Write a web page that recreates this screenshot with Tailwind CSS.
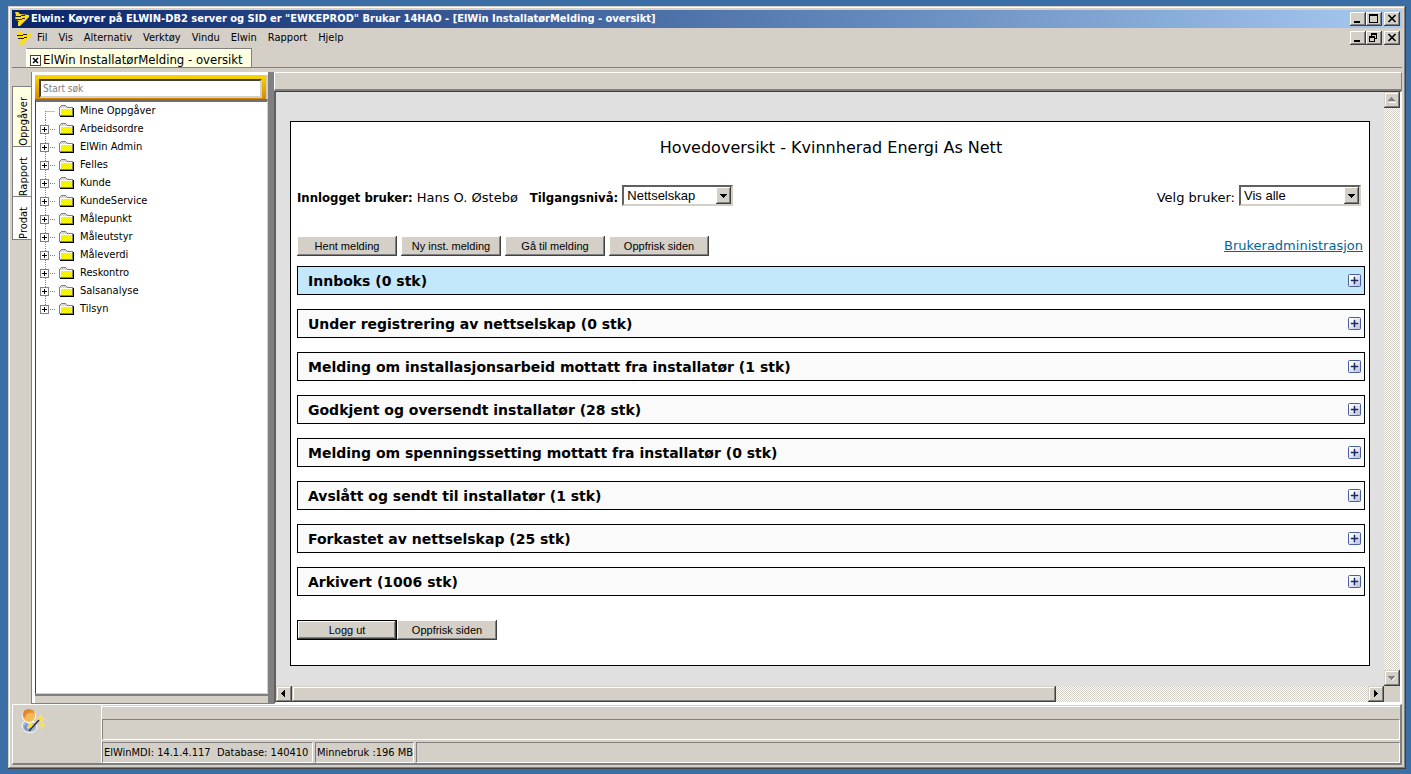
<!DOCTYPE html>
<html lang="no">
<head>
<meta charset="utf-8">
<meta name="viewport" content="width=device-width, initial-scale=1">
<title>ElWin InstallatørMelding - oversikt</title>
<script src="https://cdn.jsdelivr.net/npm/@tailwindcss/browser@4"></script>
</head>
<body class="flex min-h-screen flex-col bg-[#3a6ea5] pt-[6px] pr-[5px] pb-[5px] pl-2 font-['DejaVu_Sans_Condensed','DejaVu_Sans',sans-serif] text-[11px] leading-[14px] text-black">

<svg class="absolute size-0" aria-hidden="true">
  <symbol id="logo" viewBox="0 0 16 16">
    <path d="M1 1H4L6 3 15 4V6L6 15H4V11L5 10 2 9 1 6 2 4Z" fill="#ffdc14"/>
    <path d="M1 5h6v1H1zM7 4h4v1H7zM2 8h6v1H2zM8 7h3v1H8z" fill="#222"/>
  </symbol>
  <symbol id="folder" viewBox="0 0 15 14">
    <path d="M0 3h1V2h1V1h5v1h1v1h6v9H0Z" fill="#808080"/>
    <path d="M1 4h13v8H1zM2 2h5v1H2z" fill="#fff"/>
    <path d="M2 5h11v6H2zM2 2h5v1h-5zM1 3h7v1H1z" fill="#d4d0c8"/>
    <path d="M2 5.500h11M3 6.500h10M2 7.500h11M3 8.500h10M2 9.500h11M3 10.500h10M2 2.500h5M3 3.500h4" stroke="#ff0" stroke-dasharray="1 1" fill="none"/>
    <path d="M13 4h1v8H1v-1h12Z" fill="#808080"/>
    <path d="M14 4h1v9H1v-1h13Z" fill="#000"/>
  </symbol>
  <defs>
    <linearGradient id="hair" x1="0" y1="0" x2="1" y2="1"><stop stop-color="#d9791c"/><stop offset="1" stop-color="#f0a94a"/></linearGradient>
    <linearGradient id="plusbg" x1="0" y1="0" x2="1" y2="1"><stop offset=".2" stop-color="#fff"/><stop offset="1" stop-color="#b4bbdc"/></linearGradient>
  </defs>
  <symbol id="plus" viewBox="0 0 13 13">
    <rect x=".5" y=".5" width="12" height="12" rx="1" fill="url(#plusbg)" stroke="#4a5f9e"/>
    <path d="M6 3h1v3h3v1H7v3H6V7H3V6h3Z" fill="#1c2a60" stroke="#1c2a60" stroke-width=".5"/>
  </symbol>
</svg>

<div class="flex flex-1 flex-col bg-[#d4d0c8] p-1 shadow-[inset_-1px_-1px_#404040,inset_1px_1px_#d4d0c8,inset_-2px_-2px_#808080,inset_2px_2px_#fff]">

  <header>
    <div class="flex h-[18px] items-center bg-linear-to-r from-[#0a246a] to-[#a6caf0] pr-[2px] pl-[2px]">
      <svg class="mr-px size-4"><use href="#logo"/></svg>
      <h1 class="flex-1 font-bold whitespace-nowrap text-white">Elwin: Køyrer på ELWIN-DB2 server og SID er "EWKEPROD" Brukar 14HAO - [ElWin InstallatørMelding - oversikt]</h1>
      <div class="flex">
        <button aria-label="Minimer" class="h-[14px] w-4 bg-[#d4d0c8] shadow-[inset_-1px_-1px_#404040,inset_1px_1px_#fff,inset_-2px_-2px_#808080]"><svg class="h-[14px] w-4"><path d="M4 9h6v2H4z"/></svg></button>
        <button aria-label="Maksimer" class="mr-[2px] h-[14px] w-4 bg-[#d4d0c8] shadow-[inset_-1px_-1px_#404040,inset_1px_1px_#fff,inset_-2px_-2px_#808080]"><svg class="h-[14px] w-4"><path fill-rule="evenodd" d="M3 2h9v9H3zM4 4v6h7V4z"/></svg></button>
        <button aria-label="Lukk" class="h-[14px] w-4 bg-[#d4d0c8] shadow-[inset_-1px_-1px_#404040,inset_1px_1px_#fff,inset_-2px_-2px_#808080]"><svg class="h-[14px] w-4"><path d="M4 3l7 7M11 3l-7 7" transform="translate(.5 0)" stroke="#000" stroke-width="1.6"/></svg></button>
      </div>
    </div>
    <div class="flex h-5 items-center pr-[2px] pl-1">
      <svg class="mr-[2px] size-4"><use href="#logo"/></svg>
      <nav class="flex flex-1 gap-[11px] pl-[3px]">
        <button>Fil</button><button>Vis</button><button>Alternativ</button><button>Verktøy</button><button>Vindu</button><button>Elwin</button><button>Rapport</button><button>Hjelp</button>
      </nav>
      <div class="flex">
        <button aria-label="Minimer dokument" class="h-[14px] w-4 shadow-[inset_-1px_-1px_#404040,inset_1px_1px_#fff,inset_-2px_-2px_#808080]"><svg class="h-[14px] w-4"><path d="M4 9h6v2H4z"/></svg></button>
        <button aria-label="Gjenopprett dokument" class="mr-[2px] h-[14px] w-4 shadow-[inset_-1px_-1px_#404040,inset_1px_1px_#fff,inset_-2px_-2px_#808080]"><svg class="h-[14px] w-4"><path fill-rule="evenodd" d="M5 2h6v6H9V7h1V4H6v1H5zM3 5h6v6H3zM4 7v3h4V7z"/></svg></button>
        <button aria-label="Lukk dokument" class="h-[14px] w-4 shadow-[inset_-1px_-1px_#404040,inset_1px_1px_#fff,inset_-2px_-2px_#808080]"><svg class="h-[14px] w-4"><path d="M4 3l7 7M11 3l-7 7" transform="translate(.5 0)" stroke="#000" stroke-width="1.6"/></svg></button>
      </div>
    </div>
    <div class="flex h-5 border-b border-[#808080] pl-[14px]">
      <div class="flex w-[226px] items-center gap-[2px] overflow-hidden border-t border-r border-l border-t-[#808080] border-r-[#808080] border-l-white bg-[#ffffe1] pt-1 pl-[3px] text-[13px] leading-[16px] whitespace-nowrap">
        <button aria-label="Lukk fane" class="size-[11px] shrink-0 border border-[#404040] bg-white"><svg viewBox="0 0 9 9" class="size-[9px]"><path d="M2 2l5 5M7 2l-5 5" stroke="#000" stroke-width="1.5"/></svg></button>
        <span>ElWin InstallatørMelding - oversikt</span>
      </div>
    </div>
  </header>

  <div class="flex flex-1 pt-1">
    <div class="flex w-[19px] shrink-0 flex-col pt-[14px]">
      <button class="flex h-[61px] items-center justify-start border border-r-0 border-[#808080] bg-[#ffffe1] pl-[3px] [writing-mode:sideways-lr]">Oppgåver</button>
      <button class="flex h-[50px] items-center justify-start border border-t-0 border-r-0 border-[#808080] bg-white pl-[3px] [writing-mode:sideways-lr]">Rapport</button>
      <button class="flex h-[43px] items-center justify-start border border-t-0 border-r-0 border-[#808080] bg-white pl-[3px] [writing-mode:sideways-lr]">Prodat</button>
    </div>

    <aside class="flex w-[237px] shrink-0 flex-col border-b border-l border-[#808080]">
      <div class="flex flex-1 flex-col border-t-3 border-l-3 border-white">
        <div class="mr-[2px] bg-linear-to-b from-[#f8d800] to-[#d88800] px-1 pt-1 pb-px">
          <input type="text" placeholder="Start søk" aria-label="Start søk" class="block h-[19px] w-full border-2 border-t-[#404040] border-r-[#d4d0c8] border-b-[#d4d0c8] border-l-[#404040] bg-white px-[2px] text-[10px] outline-none placeholder:text-[#808080]">
        </div>
        <div class="flex-1 border-t-3 border-r border-b border-l border-t-[#707070] border-r-[#d4d0c8] border-b-[#d4d0c8] border-l-[#404040] bg-white">
          <ul id="tree"></ul>
        </div>
        <div class="border-t-2 border-[#808080] bg-[#d4d0c8] pb-[7px]"></div>
      </div>
    </aside>
    <div class="w-[6px] shrink-0 bg-[#808080]"></div>

    <main class="flex min-w-0 flex-1 flex-col">
      <div class="h-[19px] border-t border-r border-b-2 border-l border-t-white border-r-[#808080] border-b-[#808080] border-l-white"></div>
      <div class="flex flex-1 flex-col border-t border-r-2 border-b-2 border-l-2 border-t-[#404040] border-r-white border-b-white border-l-[#606060]">
        <div class="flex flex-1">
          <div class="min-w-0 flex-1 bg-[#e0e0e0] pt-[29px] pr-[14px] pb-5 pl-[14px] font-['DejaVu_Sans',sans-serif] text-[13px] leading-[16px]">
            <div class="flex h-full flex-col border border-black bg-white pt-4 pr-1 pb-6 pl-[6px]">
              <h2 class="text-center text-[16px] leading-[20px]">Hovedoversikt - Kvinnherad Energi As Nett</h2>
              <div class="mt-[27px] flex items-start pr-1">
                <b class="mt-[6px] mr-1 font-['DejaVu_Sans_Condensed'] leading-[14px]">Innlogget bruker:</b><span class="mt-[6px] mr-3 leading-[14px]">Hans O. Østebø</span>
                <label for="niva" class="mt-[6px] mr-1 font-['DejaVu_Sans_Condensed'] leading-[14px] font-bold">Tilgangsnivå:</label>
                <div class="relative w-[111px]">
                  <select id="niva" class="h-[21px] w-full appearance-none border-2 border-t-[#606060] border-r-[#d4d0c8] border-b-[#d4d0c8] border-l-[#606060] bg-white pl-[3px] font-['Liberation_Sans'] text-[13px] leading-[17px]"><option>Nettselskap</option></select>
                  <svg class="pointer-events-none absolute top-[2px] right-[2px] h-[17px] w-[15px] bg-[#d4d0c8] shadow-[inset_-1px_-1px_#404040,inset_1px_1px_#fff,inset_-2px_-2px_#808080]"><path d="M4 7h7v1h-1v1H9v1H8v1H7v-1H6V9H5V8H4z"/></svg>
                </div>
                <label for="bruker" class="mt-[6px] mr-1 ml-auto leading-[14px]">Velg bruker:</label>
                <div class="relative w-[122px]">
                  <select id="bruker" class="h-[21px] w-full appearance-none border-2 border-t-[#606060] border-r-[#d4d0c8] border-b-[#d4d0c8] border-l-[#606060] bg-white pl-[3px] font-['Liberation_Sans'] text-[13px] leading-[17px]"><option>Vis alle</option></select>
                  <svg class="pointer-events-none absolute top-[2px] right-[2px] h-[17px] w-[15px] bg-[#d4d0c8] shadow-[inset_-1px_-1px_#404040,inset_1px_1px_#fff,inset_-2px_-2px_#808080]"><path d="M4 7h7v1h-1v1H9v1H8v1H7v-1H6V9H5V8H4z"/></svg>
                </div>
              </div>
              <div class="mt-[30px] flex items-center gap-1 pr-[2px] font-['Liberation_Sans'] text-[11px]">
                <button class="h-5 w-[100px] bg-[#d4d0c8] shadow-[inset_-1px_-1px_#404040,inset_1px_1px_#fff,inset_-2px_-2px_#808080]">Hent melding</button>
                <button class="h-5 w-[100px] bg-[#d4d0c8] shadow-[inset_-1px_-1px_#404040,inset_1px_1px_#fff,inset_-2px_-2px_#808080]">Ny inst. melding</button>
                <button class="h-5 w-[100px] bg-[#d4d0c8] shadow-[inset_-1px_-1px_#404040,inset_1px_1px_#fff,inset_-2px_-2px_#808080]">Gå til melding</button>
                <button class="h-5 w-[100px] bg-[#d4d0c8] shadow-[inset_-1px_-1px_#404040,inset_1px_1px_#fff,inset_-2px_-2px_#808080]">Oppfrisk siden</button>
                <a href="#" class="ml-auto font-['DejaVu_Sans'] text-[13px] text-[#006699] underline">Brukeradministrasjon</a>
              </div>
              <div id="sections" class="mt-[10px] flex flex-col gap-[14px]"></div>
              <div class="mt-6 flex font-['Liberation_Sans'] text-[11px] leading-[14px]">
                <button class="h-5 w-[100px] border border-black bg-[#d4d0c8] shadow-[inset_-1px_-1px_#404040,inset_1px_1px_#fff,inset_-2px_-2px_#808080]">Logg ut</button>
                <button class="h-5 w-[100px] bg-[#d4d0c8] shadow-[inset_-1px_-1px_#404040,inset_1px_1px_#fff,inset_-2px_-2px_#808080]">Oppfrisk siden</button>
              </div>
            </div>
          </div>
          <div class="flex w-4 shrink-0 flex-col justify-between bg-[repeating-conic-gradient(#fff_0_25%,#d4d0c8_0_50%)] bg-[length:2px_2px]">
            <button aria-label="Rull opp" class="size-4 bg-[#d4d0c8] shadow-[inset_-1px_-1px_#404040,inset_1px_1px_#d4d0c8,inset_-2px_-2px_#808080,inset_2px_2px_#fff]"><svg class="size-4"><path d="M5 10h7v1H5z" fill="#fff"/><path d="M4 9h7V8h-1V7H9V6H8V5H7v1H6v1H5v1H4z" fill="#808080"/></svg></button>
            <button aria-label="Rull ned" class="size-4 bg-[#d4d0c8] shadow-[inset_-1px_-1px_#404040,inset_1px_1px_#d4d0c8,inset_-2px_-2px_#808080,inset_2px_2px_#fff]"><svg class="size-4"><path d="M8 11l4-4v-1l-4 4z" fill="#fff"/><path d="M4 6h7v1h-1v1H9v1H8v1H7V9H6V8H5V7H4z" fill="#808080"/></svg></button>
          </div>
        </div>
        <div class="flex h-4">
          <button aria-label="Rull til venstre" class="size-4 bg-[#d4d0c8] shadow-[inset_-1px_-1px_#404040,inset_1px_1px_#d4d0c8,inset_-2px_-2px_#808080,inset_2px_2px_#fff]"><svg class="size-4"><path d="M9 4v7H8v-1H7V9H6V8H5V7h1V6h1V5h1V4z"/></svg></button>
          <div class="flex-1 bg-[repeating-conic-gradient(#fff_0_25%,#d4d0c8_0_50%)] bg-[length:2px_2px]">
            <div class="h-4 w-[71%] bg-[#d4d0c8] shadow-[inset_-1px_-1px_#404040,inset_1px_1px_#d4d0c8,inset_-2px_-2px_#808080,inset_2px_2px_#fff]"></div>
          </div>
          <button aria-label="Rull til høyre" class="size-4 bg-[#d4d0c8] shadow-[inset_-1px_-1px_#404040,inset_1px_1px_#d4d0c8,inset_-2px_-2px_#808080,inset_2px_2px_#fff]"><svg class="size-4"><path d="M6 4v7h1v-1h1V9h1V8h1V7H9V6H8V5H7V4z"/></svg></button>
          <div class="w-4"></div>
        </div>
      </div>
    </main>
  </div>

  <footer class="flex border-t border-r-2 border-b-2 border-l border-t-white border-r-[#808080] border-b-[#808080] border-l-white">
    <div class="w-[89px] shrink-0 border-r border-white pt-[3px] pl-2">
      <svg viewBox="0 0 24 25" class="h-[25px] w-6">
        <path d="M1 18q0-4 4-5l2 2h3l3-1q3 2 3 5-1 5-7 5.500Q1 24 1 18z" fill="#9db4dc" stroke="#fff"/>
        <path d="M3 19q1-3 4-3-2 3 0 7-4-1-4-4z" fill="#7f93b8"/>
        <circle cx="8" cy="8" r="6.500" fill="#f7b955" stroke="#fff"/>
        <path d="M2 9Q1 1 8 1q6 0 6 6-2-3-5-2-3 0-4 3l-1 2z" fill="url(#hair)"/>
        <path d="M20 7l1 3 2 1-2 1-1 2-2-2-2-1 2-1zM21 14l1 2 2 1-2 1-1 3-1-3-2-1 2-1zM9 14l1 2 3 1-2 1v3l-2-2-3 1 2-3z" fill="#ffe020" stroke="#fff6a0" stroke-width=".4"/>
        <path d="M8 23 18 12" stroke="#333" stroke-width="1.600"/>
      </svg>
    </div>
    <div class="mt-px flex flex-1 flex-col gap-[2px] border-t border-white pt-3">
      <div class="h-[21px] border border-t-[#808080] border-r-white border-b-white border-l-[#808080]"></div>
      <div class="flex h-[21px] gap-[2px] whitespace-pre">
        <div class="flex w-[211px] items-center border border-t-[#808080] border-r-white border-b-white border-l-[#808080] pl-px">ElWinMDI: 14.1.4.117  Database: 140410</div>
        <div class="flex w-[99px] items-center border border-t-[#808080] border-r-white border-b-white border-l-[#808080] pl-px">Minnebruk :196 MB</div>
        <div class="flex-1 border border-t-[#808080] border-r-white border-b-white border-l-[#808080]"></div>
      </div>
    </div>
  </footer>
</div>

<script>
const nodes = ['Mine Oppgåver', 'Arbeidsordre', 'ElWin Admin', 'Felles', 'Kunde', 'KundeService', 'Målepunkt', 'Måleutstyr', 'Måleverdi', 'Reskontro', 'Salsanalyse', 'Tilsyn'];
document.getElementById('tree').innerHTML = nodes.map((name, i) => {
  const line = i === 0 ? 'M9.5 9v9M9.500 9.500h9' : i === nodes.length - 1 ? 'M9.500 0v5M14 9.500h5' : 'M9.500 0v5M9.500 14v4M14 9.500h5';
  const box = i === 0 ? '' : '<rect x="4.500" y="5.500" width="8" height="8" fill="#fff" stroke="#808080"/><path d="M6 9h5v1H6zM8 7h1v5H8z"/>';
  return `<li class="flex h-[18px] items-center whitespace-nowrap"><svg class="h-[18px] w-[23px]"><path d="${line}" stroke="#808080" stroke-dasharray="1 1" fill="none"/>${box}</svg><svg class="mr-[6px] h-[14px] w-[15px]"><use href="#folder"/></svg>${name}</li>`;
}).join('');

const sections = ['Innboks (0 stk)', 'Under registrering av nettselskap (0 stk)', 'Melding om installasjonsarbeid mottatt fra installatør (1 stk)', 'Godkjent og oversendt installatør (28 stk)', 'Melding om spenningssetting mottatt fra installatør (0 stk)', 'Avslått og sendt til installatør (1 stk)', 'Forkastet av nettselskap (25 stk)', 'Arkivert (1006 stk)'];
document.getElementById('sections').innerHTML = sections.map((name, i) =>
  `<section class="flex h-[29px] items-center justify-between border border-black pr-[3px] pl-[10px] ${i ? 'bg-[#fafafa]' : 'bg-[#c3e7fb]'}"><h3 class="text-[14px] leading-[18px] font-bold">${name}</h3><button aria-label="Vis ${name}" class="size-[13px]"><svg class="size-[13px]"><use href="#plus"/></svg></button></section>`
).join('');
</script>
</body>
</html>
